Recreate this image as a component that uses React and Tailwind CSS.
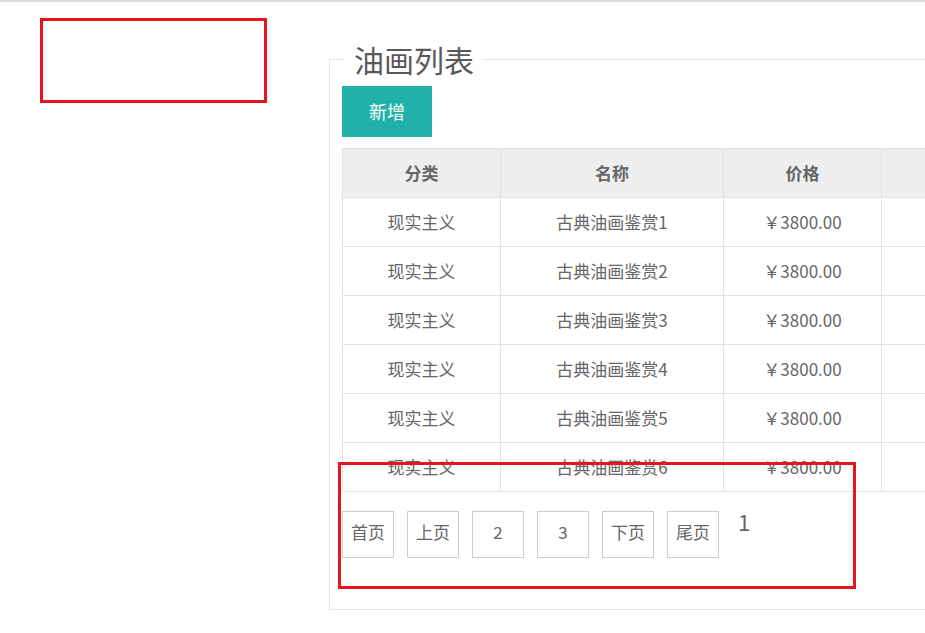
import React from 'react';

const rows = [1, 2, 3, 4, 5, 6].map((n) => ({
  type: '现实主义',
  name: `古典油画鉴赏${n}`,
  price: '￥3800.00',
}));

const pages = ['首页', '上页', '2', '3', '下页', '尾页'];

function App() {
  return (
    <div
      className="relative w-[925px] h-[633px] overflow-hidden bg-white border-t-2 border-[#dadade] text-[#666]"
      style={{ fontFamily: '"Noto Sans CJK SC", "Liberation Sans", sans-serif' }}
    >
      <fieldset className="ml-[329px] mt-[42px] w-[760px] border border-[#e6e6e6] pl-[12px] pr-0 pb-[51px]">
        <legend className="ml-[2px] px-[10px] text-[30px] leading-[30px] text-[#595959]">油画列表</legend>

        <button className="mt-[12px] w-[90px] h-[51px] bg-[#20b2aa] text-white text-[18px]">新增</button>

        <table className="mt-[11px] w-[700px] border-collapse text-[17px] text-center table-fixed">
          <colgroup>
            <col className="w-[158px]" />
            <col className="w-[223px]" />
            <col className="w-[158px]" />
            <col />
          </colgroup>
          <thead>
            <tr className="bg-[#eeeeee] h-[49px]">
              <th className="border border-[#e2e2e2] font-bold">分类</th>
              <th className="border border-[#e2e2e2] font-bold">名称</th>
              <th className="border border-[#e2e2e2] font-bold">价格</th>
              <th className="border border-[#e2e2e2] font-bold"></th>
            </tr>
          </thead>
          <tbody>
            {rows.map((r) => (
              <tr key={r.name} className="h-[49px]">
                <td className="border border-[#e2e2e2]">{r.type}</td>
                <td className="border border-[#e2e2e2]">{r.name}</td>
                <td className="border border-[#e2e2e2]">{r.price}</td>
                <td className="border border-[#e2e2e2]"></td>
              </tr>
            ))}
          </tbody>
        </table>

        <div className="mt-[19px] flex items-start gap-[13px]">
          {pages.map((p) => (
            <span
              key={p}
              className="w-[52px] h-[47px] flex items-center justify-center border border-[#cccccc] text-[17px] leading-none pb-[6px]"
            >
              {p}
            </span>
          ))}
          <span className="ml-[6px] text-[22px] leading-[20px]">1</span>
        </div>
      </fieldset>

      <div className="absolute left-[40px] top-[16px] w-[227px] h-[85px] border-[3px] border-[#e8141c]" />
      <div className="absolute left-[338px] top-[460px] w-[518px] h-[127px] border-[3px] border-[#e8141c]" />
    </div>
  );
}

export default App;
